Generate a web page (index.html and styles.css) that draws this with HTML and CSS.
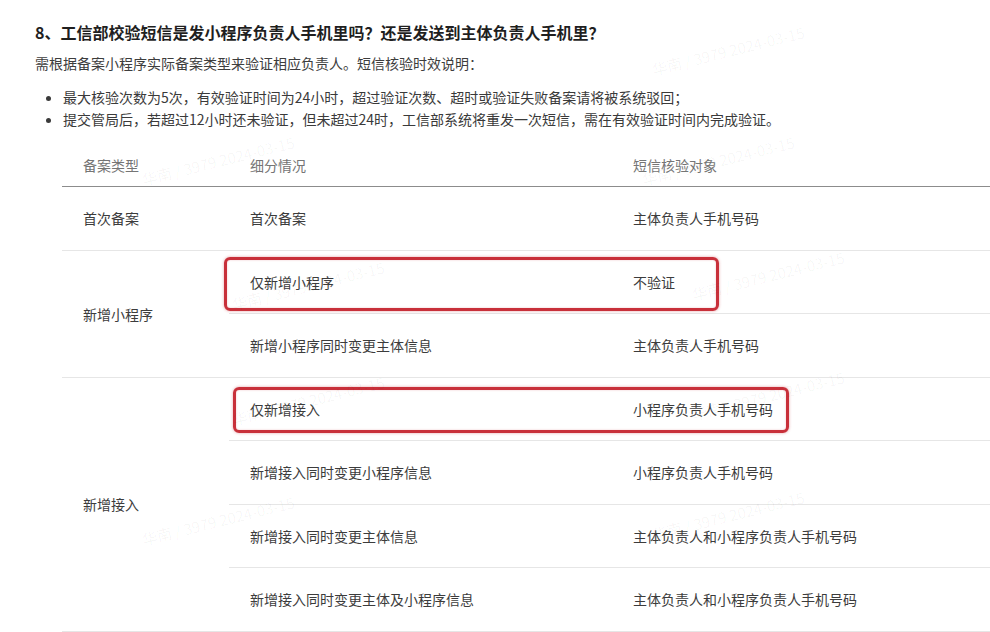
FILE: index.html
```html
<!DOCTYPE html>
<html lang="zh-CN">
<head>
<meta charset="utf-8">
<title>FAQ</title>
<link rel="stylesheet" href="styles.css">
</head>
<body>
<div class="page">
  <h2 class="title">8、工信部校验短信是发小程序负责人手机里吗？还是发送到主体负责人手机里？</h2>
  <p class="desc">需根据备案小程序实际备案类型来验证相应负责人。短信核验时效说明：</p>
  <ul class="rules">
    <li>最大核验次数为5次，有效验证时间为24小时，超过验证次数、超时或验证失败备案请将被系统驳回；</li>
    <li>提交管局后，若超过12小时还未验证，但未超过24时，工信部系统将重发一次短信，需在有效验证时间内完成验证。</li>
  </ul>
  <div class="table-wrap">
    <table class="grid">
      <thead>
        <tr>
          <th class="c1">备案类型</th>
          <th class="c2">细分情况</th>
          <th class="c3">短信核验对象</th>
        </tr>
      </thead>
      <tbody>
        <tr>
          <td>首次备案</td>
          <td>首次备案</td>
          <td>主体负责人手机号码</td>
        </tr>
        <tr>
          <td rowspan="2">新增小程序</td>
          <td>仅新增小程序</td>
          <td>不验证</td>
        </tr>
        <tr>
          <td>新增小程序同时变更主体信息</td>
          <td>主体负责人手机号码</td>
        </tr>
        <tr>
          <td rowspan="4">新增接入</td>
          <td>仅新增接入</td>
          <td>小程序负责人手机号码</td>
        </tr>
        <tr>
          <td>新增接入同时变更小程序信息</td>
          <td>小程序负责人手机号码</td>
        </tr>
        <tr>
          <td>新增接入同时变更主体信息</td>
          <td>主体负责人和小程序负责人手机号码</td>
        </tr>
        <tr>
          <td>新增接入同时变更主体及小程序信息</td>
          <td>主体负责人和小程序负责人手机号码</td>
        </tr>
      </tbody>
    </table>
  </div>
  <div class="mark mark-a"></div>
  <div class="mark mark-b"></div>
  <div class="watermarks">
    <span class="wm" style="left:140px;top:150px">华南 / 3979 2024-03-15</span>
    <span class="wm" style="left:650px;top:40px">华南 / 3979 2024-03-15</span>
    <span class="wm" style="left:640px;top:150px">华南 / 3979 2024-03-15</span>
    <span class="wm" style="left:230px;top:275px">华南 / 3979 2024-03-15</span>
    <span class="wm" style="left:690px;top:265px">华南 / 3979 2024-03-15</span>
    <span class="wm" style="left:230px;top:390px">华南 / 3979 2024-03-15</span>
    <span class="wm" style="left:690px;top:385px">华南 / 3979 2024-03-15</span>
    <span class="wm" style="left:140px;top:510px">华南 / 3979 2024-03-15</span>
    <span class="wm" style="left:650px;top:505px">华南 / 3979 2024-03-15</span>
  </div>
</div>
</body>
</html>
```
FILE: styles.css
```css
html, body {
  margin: 0;
  padding: 0;
  background: #ffffff;
}
body {
  font-family: "Noto Sans CJK SC", "Noto Sans", "Liberation Sans", sans-serif;
  color: #333333;
  overflow: hidden;
}
.page {
  position: relative;
  padding: 20px 0 0 35px;
  width: 955px;
  height: 612px;
  overflow: hidden;
}
.title {
  margin: 0 0 8px;
  font-size: 16px;
  line-height: 24px;
  font-weight: 700;
  color: #1f1f1f;
}
.desc {
  margin: 0;
  font-size: 14px;
  line-height: 22px;
  color: #3d3d3d;
}
.rules {
  margin: 12px 0 13px;
  padding-left: 28px;
  font-size: 14px;
  line-height: 22px;
  color: #3a3a3a;
}
.table-wrap {
  margin-left: 27px;
}
.grid {
  border-collapse: collapse;
  width: 928px;
  font-size: 14px;
  table-layout: fixed;
}
.grid th {
  height: 43px;
  padding: 0 21px;
  text-align: left;
  font-weight: 400;
  color: #757575;
  border-bottom: 1px solid #8c8c8c;
}
.grid th.c1 { width: 125px; }
.grid th.c2 { width: 341px; }
.grid td {
  height: 62.5px;
  padding: 0 21px;
  color: #3c3c3c;
  border-bottom: 1px solid #e6e6e6;
  vertical-align: middle;
}
.mark {
  position: absolute;
  border: 3px solid #c8303a;
  border-radius: 6px;
  box-shadow: 0 0 3px rgba(200, 48, 58, 0.45), inset 0 0 2px rgba(200, 48, 58, 0.3);
  pointer-events: none;
}
.mark-a {
  left: 224px;
  top: 257px;
  width: 489px;
  height: 48px;
}
.mark-b {
  left: 233px;
  top: 387px;
  width: 550px;
  height: 40px;
}
.watermarks {
  position: absolute;
  inset: 0;
  pointer-events: none;
}
.wm {
  position: absolute;
  font-size: 15px;
  color: rgba(0, 0, 0, 0.04);
  transform: rotate(-14deg);
  white-space: nowrap;
}
```
